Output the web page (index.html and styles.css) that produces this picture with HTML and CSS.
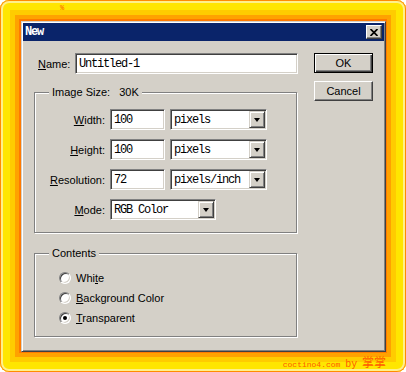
FILE: index.html
```html
<!DOCTYPE html>
<html lang="en">
<head>
    <meta charset="UTF-8">
    <title>New</title>
    <link rel="stylesheet" href="styles.css">
</head>
<body>
    <div class="frame">
        <div class="mark">%</div>
        <div class="dialog">
            <div class="titlebar">
                <span class="title">New</span>
                <button class="close">
                    <svg width="8" height="7" viewBox="0 0 8 7"><path d="M0.5 0 L7.5 7 M7.5 0 L0.5 7" stroke="#000" stroke-width="1.7"/></svg>
                </button>
            </div>
            <div class="body">
                <div class="main">
                    <div class="name-row">
                        <label><u>N</u>ame:</label>
                        <div class="field name-field">Untitled-1</div>
                    </div>
                    <div class="group size-group">
                        <span class="legend">Image Size: <span class="size">30K</span></span>
                        <div class="size-grid">
                            <label><u>W</u>idth:</label>
                            <div class="field">100</div>
                            <div class="select"><span>pixels</span><span class="drop"></span></div>

                            <label><u>H</u>eight:</label>
                            <div class="field">100</div>
                            <div class="select"><span>pixels</span><span class="drop"></span></div>

                            <label><u>R</u>esolution:</label>
                            <div class="field">72</div>
                            <div class="select"><span>pixels/inch</span><span class="drop"></span></div>

                            <label><u>M</u>ode:</label>
                            <div class="select mode"><span>RGB Color</span><span class="drop"></span></div>
                        </div>
                    </div>
                    <div class="group contents-group">
                        <span class="legend">Contents</span>
                        <div class="radio-row"><span class="radio"></span><span>Whi<u>t</u>e</span></div>
                        <div class="radio-row"><span class="radio"></span><span><u>B</u>ackground Color</span></div>
                        <div class="radio-row"><span class="radio checked"></span><span><u>T</u>ransparent</span></div>
                    </div>
                </div>
                <div class="buttons">
                    <button class="btn default">OK</button>
                    <button class="btn">Cancel</button>
                </div>
            </div>
        </div>
        <div class="credit">coctino4.com <span class="by">by</span> <span class="cn">掌掌</span></div>
    </div>
</body>
</html>
```

FILE: styles.css
```css
body {
    margin: 0;
    padding: 0;
    font-family: "Liberation Sans", Arial, sans-serif;
    font-size: 11px;
    color: #000;
    background-color: #fff;
}
.frame {
    width: 406px;
    height: 372px;
    box-sizing: border-box;
    padding: 0 20px 0 21px;
    border-radius: 9px;
    background-color: #ff7a00;
    box-shadow:
        inset 0 0 0 1px #ff8c00,
        inset 0 0 0 3px #fff08a,
        inset 0 0 0 10px #ffe600,
        inset 0 0 0 15px #ffcc00,
        inset 0 0 0 19px #ffa200;
}
.mark {
    height: 21px;
    padding-left: 39px;
    font-family: "Liberation Mono", monospace;
    font-size: 7px;
    line-height: 16px;
    color: #ff5a00;
}
.dialog {
    height: 331px;
    box-sizing: border-box;
    padding: 1px;
    border: 1px solid;
    border-color: #d4d0c8 #404040 #404040 #d4d0c8;
    background-color: #d4d0c8;
    box-shadow: inset 1px 1px #fff, inset -1px -1px #808080;
}
.titlebar {
    height: 18px;
    display: flex;
    align-items: center;
    justify-content: space-between;
    padding: 0 2px;
    background-color: #0a246a;
}
.title {
    font-family: "Liberation Mono", monospace;
    font-weight: bold;
    font-size: 12px;
    letter-spacing: -1.2px;
    color: #fff;
}
.close {
    width: 16px;
    height: 14px;
    padding: 0;
    display: flex;
    align-items: center;
    justify-content: center;
    border: 1px solid;
    border-color: #fff #404040 #404040 #fff;
    box-shadow: inset -1px -1px #808080;
    background-color: #d4d0c8;
}
.body {
    display: flex;
    gap: 16px;
    padding: 12px 11px 0 11px;
}
.main {
    width: 264px;
}
.name-row {
    display: flex;
    align-items: center;
}
.name-row label {
    width: 41px;
    box-sizing: border-box;
    padding-left: 4px;
}
.field {
    height: 21px;
    box-sizing: border-box;
    padding: 0 3px;
    display: flex;
    align-items: center;
    border: 1px solid;
    border-color: #808080 #fff #fff #808080;
    box-shadow: inset 1px 1px #404040, inset -1px -1px #d4d0c8;
    background-color: #fff;
    font-family: "Liberation Mono", monospace;
    font-size: 12px;
    letter-spacing: -1.2px;
}
.name-field {
    flex: 1;
}
.group {
    position: relative;
    width: 263px;
    box-sizing: border-box;
    border: 1px solid #808080;
    box-shadow: inset 1px 1px #fff, 1px 1px #fff;
}
.legend {
    position: absolute;
    top: -7px;
    left: 14px;
    padding: 0 3px;
    line-height: 13px;
    background-color: #d4d0c8;
}
.size {
    margin-left: 6px;
}
.size-group {
    margin-top: 18px;
    height: 141px;
    padding-top: 16px;
}
.size-grid {
    display: grid;
    grid-template-columns: 70px 55px 97px;
    grid-auto-rows: 21px;
    column-gap: 5px;
    row-gap: 9px;
    align-items: center;
}
.size-grid label {
    text-align: right;
}
.select {
    height: 21px;
    box-sizing: border-box;
    display: flex;
    align-items: center;
    justify-content: space-between;
    padding: 1px 1px 1px 3px;
    border: 1px solid;
    border-color: #808080 #fff #fff #808080;
    box-shadow: inset 1px 1px #404040, inset -1px -1px #d4d0c8;
    background-color: #fff;
    font-family: "Liberation Mono", monospace;
    font-size: 12px;
    letter-spacing: -1.2px;
}
.select.mode {
    grid-column: 2 / 4;
    width: 106px;
}
.drop {
    width: 16px;
    height: 17px;
    box-sizing: border-box;
    display: flex;
    align-items: center;
    justify-content: center;
    border: 1px solid;
    border-color: #d4d0c8 #404040 #404040 #d4d0c8;
    box-shadow: inset 1px 1px #fff, inset -1px -1px #808080;
    background-color: #d4d0c8;
}
.drop::after {
    content: "";
    border-left: 3.5px solid transparent;
    border-right: 3.5px solid transparent;
    border-top: 4px solid #000;
}
.contents-group {
    margin-top: 20px;
    height: 84px;
    padding: 14px 0 0 24px;
}
.radio-row {
    height: 20px;
    display: flex;
    align-items: center;
    gap: 5px;
}
.radio {
    width: 12px;
    height: 12px;
    box-sizing: border-box;
    display: flex;
    align-items: center;
    justify-content: center;
    border-radius: 50%;
    border: 1px solid;
    border-color: #808080 #fff #fff #808080;
    box-shadow: inset 1px 1px #404040, inset -1px -1px #d4d0c8;
    background-color: #fff;
}
.radio.checked::after {
    content: "";
    width: 4px;
    height: 4px;
    border-radius: 50%;
    background-color: #000;
}
.buttons {
    display: flex;
    flex-direction: column;
    gap: 8px;
}
.btn {
    width: 59px;
    height: 20px;
    padding: 0;
    font-family: "Liberation Sans", Arial, sans-serif;
    font-size: 11px;
    color: #000;
    border: 1px solid;
    border-color: #fff #404040 #404040 #fff;
    box-shadow: inset -1px -1px #808080;
    background-color: #d4d0c8;
}
.btn.default {
    border-color: #000;
    box-shadow: inset 1px 1px #fff, inset -1px -1px #404040, inset -2px -2px #808080;
}
.credit {
    height: 20px;
    text-align: right;
    font-family: "Liberation Mono", monospace;
    font-size: 8px;
    line-height: 20px;
    color: #ff5a00;
}
.credit .by {
    font-size: 10px;
}
.credit .cn {
    font-family: "Noto Sans CJK SC", sans-serif;
    font-size: 12px;
}
```
